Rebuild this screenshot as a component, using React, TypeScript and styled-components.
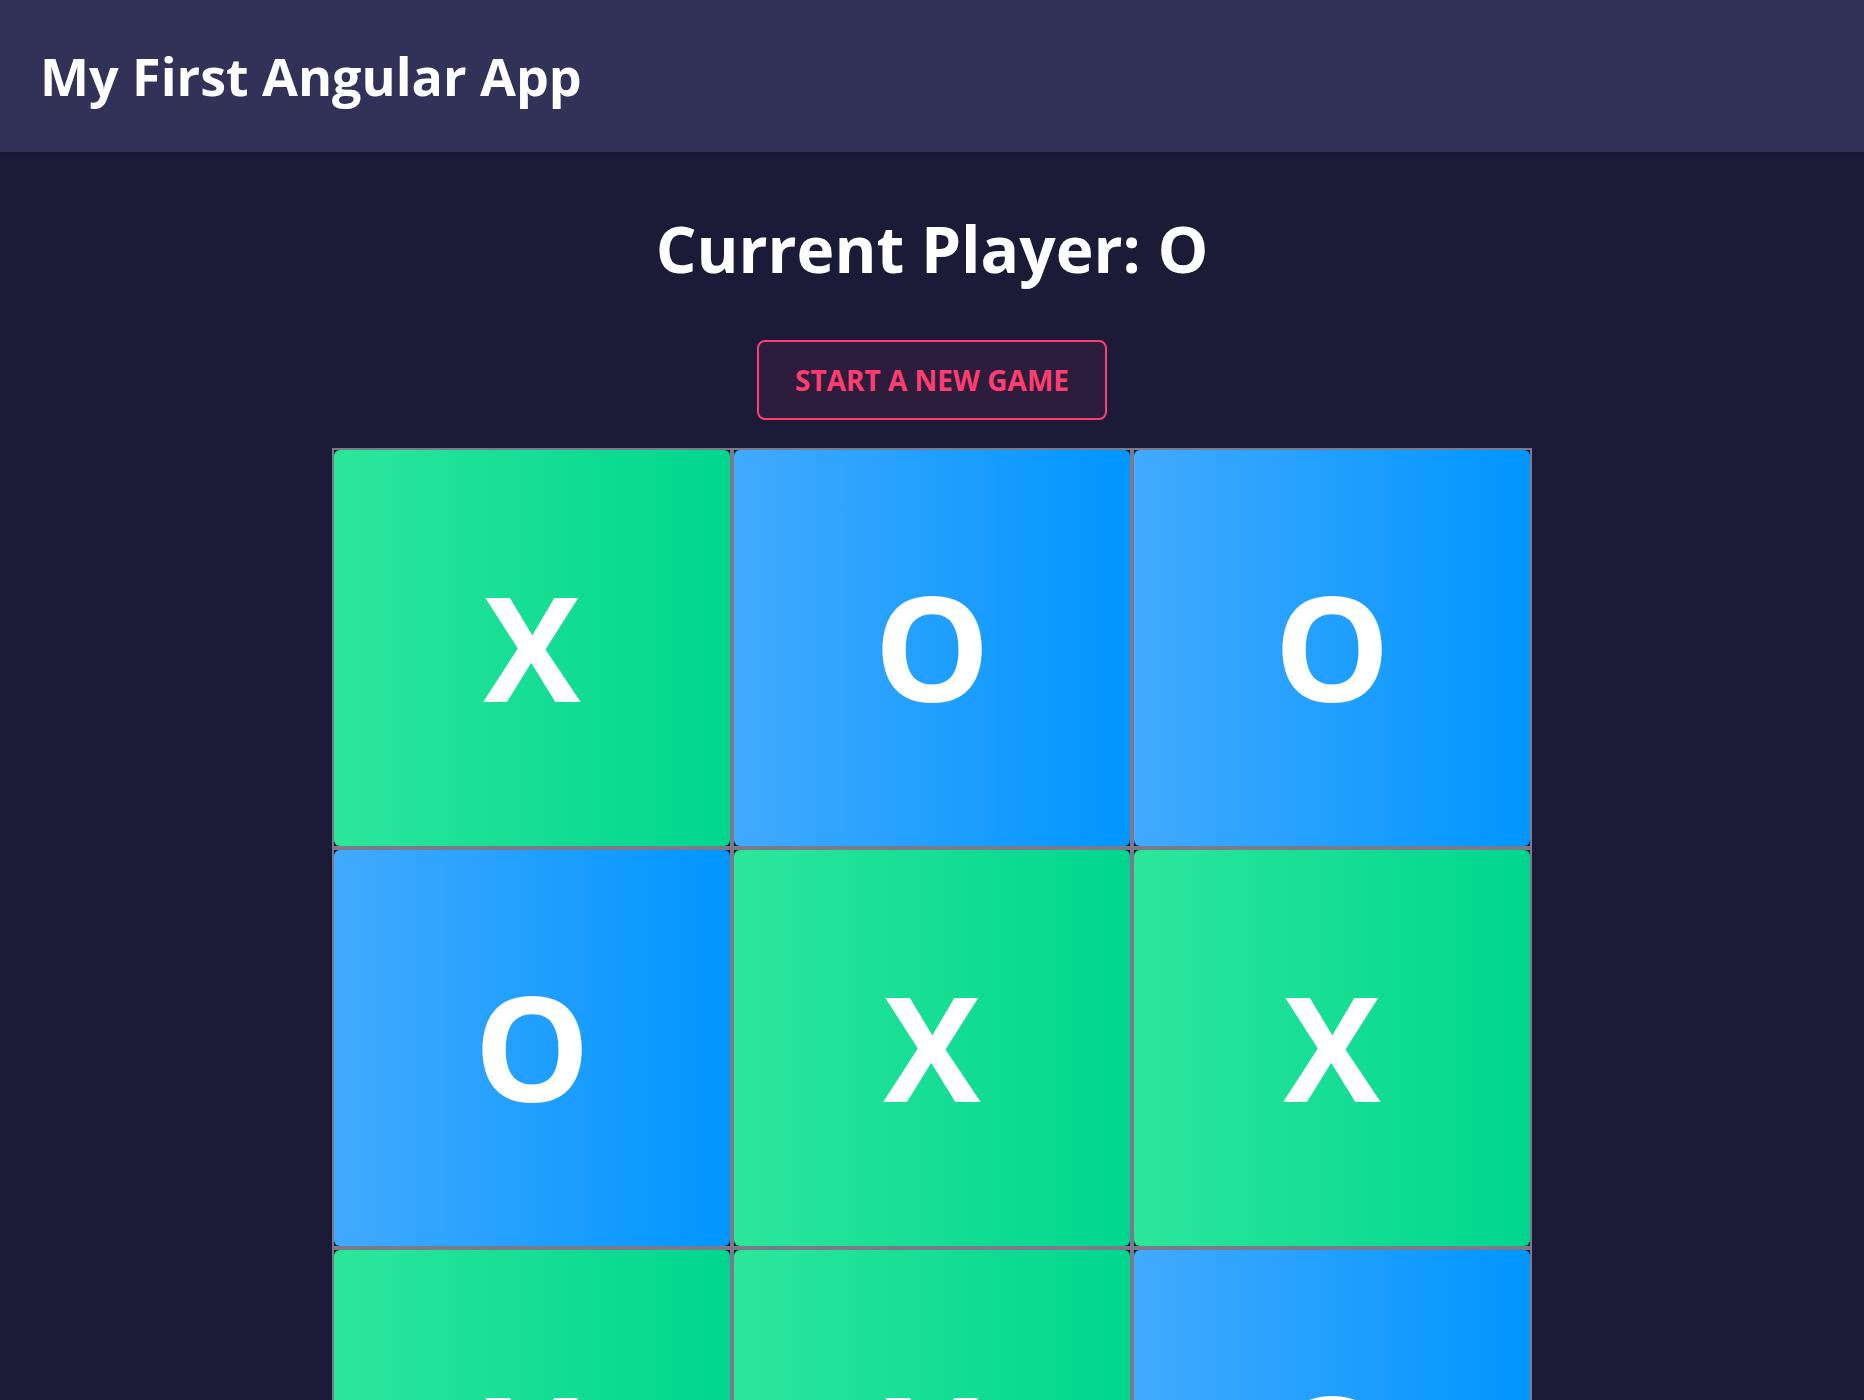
import React, { useState } from 'react';
import styled, { createGlobalStyle } from 'styled-components';

const GlobalStyle = createGlobalStyle`
    body {
        margin: 0;
        background: #1b1b38;
        font-family: "Open Sans", "Noto Sans", sans-serif;
        color: #ffffff;
    }
`;

const Header = styled.header`
    height: 152px;
    display: flex;
    align-items: center;
    padding: 0 40px;
    background: #323259;
    box-shadow: 0 1px 4px rgba(0, 0, 0, 0.2);
`;

const Title = styled.div`
    font-size: 52px;
    font-weight: 700;
    line-height: 64px;
`;

const Main = styled.main`
    display: flex;
    flex-direction: column;
    align-items: center;
    padding-top: 48px;
`;

const Heading = styled.h1`
    margin: 0;
    font-size: 64px;
    font-weight: 700;
    line-height: 98px;
`;

const NewGameButton = styled.button`
    margin-top: 42px;
    padding: 22px 36px;
    border: 2px solid #ff3d71;
    border-radius: 8px;
    background: rgba(255, 61, 113, 0.08);
    color: #ff3d71;
    font-family: inherit;
    font-size: 28px;
    font-weight: 700;
    line-height: 32px;
    text-transform: uppercase;
    cursor: pointer;
`;

const Board = styled.div`
    margin-top: 28px;
    display: grid;
    grid-template-columns: repeat(3, 400px);
    grid-auto-rows: 400px;
`;

const Cell = styled.div`
    border: 2px solid #7a7a8a;
    display: flex;
`;

const Square = styled.button<{ $mark: 'X' | 'O' }>`
    flex: 1;
    border: none;
    border-radius: 6px;
    padding: 0 0 5px;
    background: ${({ $mark }) =>
        $mark === 'X'
            ? 'linear-gradient(to right, #2ce69b, #00d68f)'
            : 'linear-gradient(to right, #42aaff, #0095ff)'};
    color: #ffffff;
    font-family: inherit;
    font-size: 146px;
    font-weight: 700;
    cursor: pointer;
`;

const initial: ('X' | 'O')[] = ['X', 'O', 'O', 'O', 'X', 'X', 'X', 'X', 'O'];

const App: React.FC = () => {
    const [squares] = useState(initial);

    return (
        <>
            <GlobalStyle />
            <Header>
                <Title>My First Angular App</Title>
            </Header>
            <Main>
                <Heading>Current Player: O</Heading>
                <NewGameButton>Start a new game</NewGameButton>
                <Board>
                    {squares.map((mark, i) => (
                        <Cell key={i}>
                            <Square $mark={mark}>{mark}</Square>
                        </Cell>
                    ))}
                </Board>
            </Main>
        </>
    );
};

export default App;
